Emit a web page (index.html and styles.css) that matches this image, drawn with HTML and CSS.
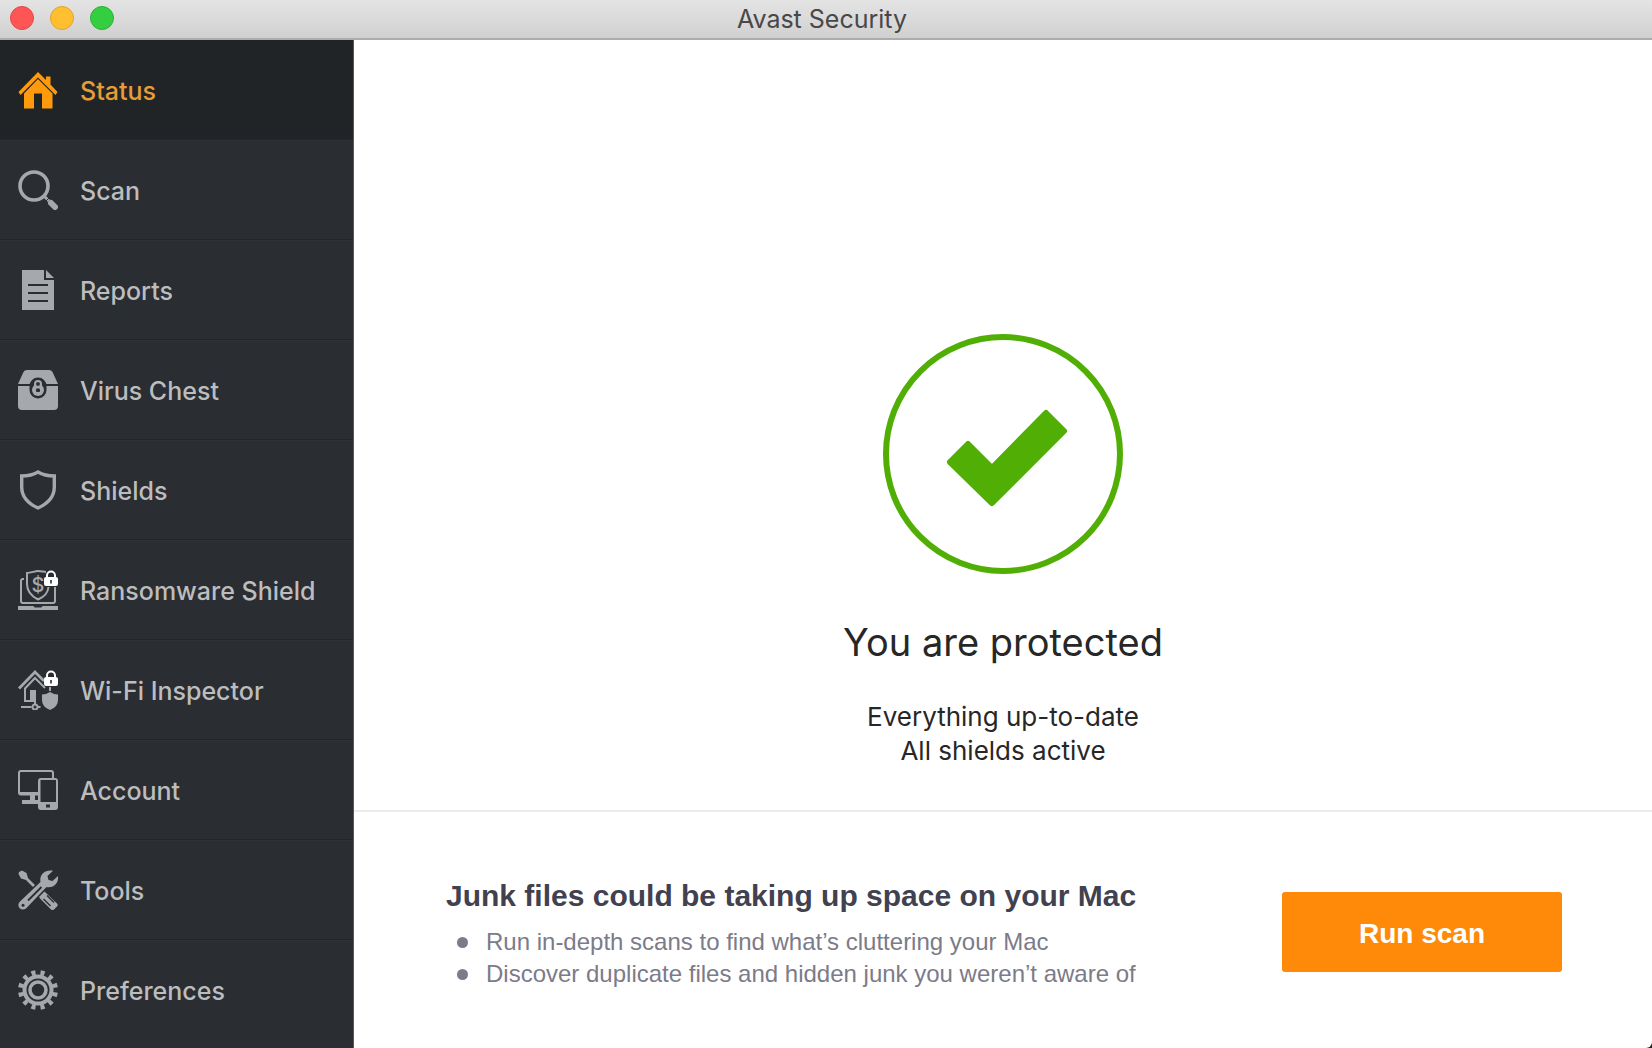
FILE: index.html
```html
<!DOCTYPE html>
<html lang="en">
<head>
    <meta charset="UTF-8">
    <meta name="viewport" content="width=device-width, initial-scale=1.0">
    <title>Avast Security</title>
    <link rel="stylesheet" href="styles.css">
</head>
<body>
    <div class="window">
        <header class="titlebar">
            <div class="window-buttons">
                <button class="dot close" type="button" aria-label="Close"></button>
                <button class="dot minimize" type="button" aria-label="Minimize"></button>
                <button class="dot zoom" type="button" aria-label="Zoom"></button>
            </div>
            <h1 class="title">Avast Security</h1>
        </header>

        <nav class="sidebar">
            <a class="nav-item active" href="#status">
                <svg class="icon" viewBox="0 0 40 40">
                    <path d="M20 2 28 10V6.500h4.500v8L39.500 22 37.500 25 20 7.500 2.500 25 .5 22z"/>
                    <path d="M20 9 34.500 23.500v15H24V23.500h-8v15H6V23.500z"/>
                </svg>
                <span>Status</span>
            </a>
            <a class="nav-item" href="#scan">
                <svg class="icon" viewBox="0 0 40 40">
                    <circle class="line" cx="16" cy="16" r="14" stroke-width="3.600"/>
                    <path class="line" d="M26 26l5 5" stroke-width="3"/>
                    <path class="line" d="M33 33l4 4" stroke-width="6" stroke-linecap="round"/>
                    <path class="cut" d="M27.500 31.500l4-4" stroke-width="1"/>
                </svg>
                <span>Scan</span>
            </a>
            <a class="nav-item" href="#reports">
                <svg class="icon" viewBox="0 0 40 40">
                    <path d="M4 0h22v10h10v30H4z"/>
                    <path d="M28 0l8 8h-8z"/>
                    <path class="cut" d="M10 15h20M10 23h20M10 31h20" stroke-width="2"/>
                </svg>
                <span>Reports</span>
            </a>
            <a class="nav-item" href="#chest">
                <svg class="icon" viewBox="0 0 40 40">
                    <path d="M9 0h22q2.500 0 3.500 2L40 14H0L5.500 2Q6.500 0 9 0z"/>
                    <path d="M0 16h40v20q0 4-4 4H4q-4 0-4-4z"/>
                    <rect class="hole" x="11.500" y="7.500" width="17" height="21" rx="8.500"/>
                    <rect x="16" y="10" width="8" height="10" rx="4"/>
                    <circle cx="20" cy="20" r="6"/>
                    <rect class="hole" x="18.300" y="12.300" width="3.400" height="3.400" rx="1"/>
                    <rect class="hole" x="18" y="18.500" width="4" height="3.500" rx="1"/>
                </svg>
                <span>Virus Chest</span>
            </a>
            <a class="nav-item" href="#shields">
                <svg class="icon" viewBox="0 0 40 40">
                    <path class="line" d="M20 2C15 5 9.500 6 3.700 6V17C3.700 26 10 33.500 20 38 30 33.500 36.300 26 36.300 17V6C30.500 6 25 5 20 2z" stroke-width="3.400"/>
                </svg>
                <span>Shields</span>
            </a>
            <a class="nav-item" href="#ransomware">
                <svg class="icon" viewBox="0 0 40 40">
                    <path class="line" d="M6 9H5Q3 9 3 11V31Q3 33 5 33H35Q37 33 37 31V17" stroke-width="2"/>
                    <path class="line" d="M30.500 17C30 23 26 27 20 29.500 13 26 9 21 9 14V3C13 3 17 1 20 1 23 1 26 2 28 2" stroke-width="2"/>
                    <text class="dollar" x="20" y="22" text-anchor="middle">$</text>
                    <path d="M0 36h15.500q.5 1.500 2 1.500h5q1.500 0 2-1.500H40v4H0z"/>
                    <rect class="lock" x="26" y="7" width="14" height="9" rx="2"/>
                    <path class="shackle" d="M29 8V5.500a4 4 0 0 1 8 0V8"/>
                    <path class="cut" d="M33 10v3.500" stroke-width="1.600"/>
                </svg>
                <span>Ransomware Shield</span>
            </a>
            <a class="nav-item" href="#wifi">
                <svg class="icon" viewBox="0 0 40 40">
                    <path class="line" d="M1 18.500L17 2l9 9" stroke-width="2.800"/>
                    <path class="line" d="M12 31H7V18.500L17 8l10 10M32 17v4" stroke-width="2"/>
                    <path d="M12 20h6v12h-6z"/>
                    <path class="line" d="M17 30v4M3 37h10.500M20 37h2.500" stroke-width="2"/>
                    <circle class="line" cx="17" cy="37" r="2.500" stroke-width="2"/>
                    <path d="M32 22q4 2.500 8 2.500V30q0 7-8 10-8-3-8-10v-5.500q4 0 8-2.500z"/>
                    <rect class="lock" x="26" y="7" width="14" height="9" rx="2"/>
                    <path class="shackle" d="M29 8V5.500a4 4 0 0 1 8 0V8"/>
                    <path class="cut" d="M33 10v3.500" stroke-width="1.600"/>
                </svg>
                <span>Wi-Fi Inspector</span>
            </a>
            <a class="nav-item" href="#account">
                <svg class="icon" viewBox="0 0 40 40">
                    <path d="M3 0h30q3 0 3 3v5h-2V3q0-1-1-1H3Q2 2 2 3v19h18v3.500h-3V30h3v4H4v-4h8v-4.500H3q-3 0-3-3V3q0-3 3-3z"/>
                    <path fill-rule="evenodd" d="M23 8h14q3 0 3 3v26q0 3-3 3H23q-3 0-3-3V11q0-3 3-3zM22.500 10v22h15.500V10zM28 34.500v3h4v-3z"/>
                </svg>
                <span>Account</span>
            </a>
            <a class="nav-item" href="#tools">
                <svg class="icon" viewBox="0 0 40 40">
                    <path d="M1 2L4 .5 8.500 3 10 8 17 15l-2 2-7-7-5-1.500L.5 4z"/>
                    <path d="M26.500 21.500L39 33.500q1.500 1.500 0 3L36 39.500q-1.500 1-3 0L21.500 28V26.500z"/>
                    <path class="cut" d="M25.500 29l7 7M29 25.500l7 7" stroke-width="1.400"/>
                    <path d="M35 .8L29.500 6l1 4 4 1L40 6c1 7-4.500 12.500-11.500 11L8 38.500C3.500 42-2 36.500 1.500 32L22.500 12C21 5 27-1 35 .8z"/>
                    <path class="cut" d="M10 30.500l13.500-13.500" stroke-width="1.800"/>
                    <circle class="hole" cx="5" cy="35.200" r="1.500"/>
                </svg>
                <span>Tools</span>
            </a>
            <a class="nav-item" href="#preferences">
                <svg class="icon" viewBox="0 0 40 40">
                    <circle class="line" cx="20" cy="20" r="13.500" stroke-width="4"/>
                    <circle class="line" cx="20" cy="20" r="8" stroke-width="3.600"/>
                    <circle class="line" cx="20" cy="20" r="17.500" stroke-width="5" pathLength="120" stroke-dasharray="4.400 5.600" stroke-dashoffset="-2.800"/>
                </svg>
                <span>Preferences</span>
            </a>
        </nav>

        <main class="content">
            <section class="status">
                <svg class="check" viewBox="0 0 240 240">
                    <circle cx="120" cy="120" r="117"/>
                    <path d="M67 128L85 110 109 134 163 79 181 97 109 169z"/>
                </svg>
                <h2>You are protected</h2>
                <p>Everything up-to-date<br>All shields active</p>
            </section>
            <section class="promo">
                <div class="promo-text">
                    <h3>Junk files could be taking up space on your Mac</h3>
                    <ul>
                        <li>Run in-depth scans to find what’s cluttering your Mac</li>
                        <li>Discover duplicate files and hidden junk you weren’t aware of</li>
                    </ul>
                </div>
                <button class="run-scan" type="button">Run scan</button>
            </section>
        </main>
    </div>
</body>
</html>
```
FILE: styles.css
```css
* {
    box-sizing: border-box;
}
body {
    margin: 0;
    font-family: Inter, "Liberation Sans", sans-serif;
    background-color: #222;
}
.window {
    display: grid;
    grid-template-columns: 354px 1fr;
    grid-template-rows: 40px 1fr;
    min-height: 100vh;
    background-color: #fff;
    border-bottom-right-radius: 6px;
}

/* title bar */
.titlebar {
    grid-column: 1 / -1;
    display: grid;
    grid-template-columns: 1fr auto 1fr;
    align-items: center;
    padding: 0 18px 0 10px;
    background: linear-gradient(#e4e4e4, #d0d0d0);
    border-bottom: 2px solid #acacac;
}
.window-buttons {
    display: flex;
    gap: 16px;
    padding-bottom: 2px;
}
.dot {
    width: 24px;
    height: 24px;
    padding: 0;
    border: 1px solid;
    border-radius: 50%;
}
.close {
    background-color: #ff5555;
    border-color: #e2474a;
}
.minimize {
    background-color: #ffbf30;
    border-color: #e2a32c;
}
.zoom {
    background-color: #34ce41;
    border-color: #2bb236;
}
.title {
    margin: 0;
    font-size: 25px;
    font-weight: 400;
    line-height: 32px;
    color: #484848;
}

/* sidebar */
.sidebar {
    display: flex;
    flex-direction: column;
    background-color: #2a2d32;
    border-right: 1px solid #56585c;
}
.nav-item {
    --row: #2a2d32;
    display: flex;
    align-items: center;
    gap: 22px;
    height: 100px;
    padding-left: 18px;
    border-bottom: 1px solid #222529;
    box-shadow: inset 0 1px #2e3136;
    background-color: var(--row);
    color: #bcbdbe;
    font-size: 25px;
    font-weight: 500;
    line-height: 32px;
    text-decoration: none;
}
.nav-item span {
    padding-top: 2px;
}
.nav-item.active {
    --row: #212427;
    box-shadow: none;
    color: #e59d37;
}
.nav-item:last-child {
    border-bottom: none;
}
.icon {
    width: 40px;
    height: 40px;
    fill: #a5a9ac;
}
.active .icon {
    fill: #ff9a0c;
}
.icon .line {
    fill: none;
    stroke: #a5a9ac;
}
.icon .cut {
    fill: none;
    stroke: var(--row);
}
.icon .hole {
    fill: var(--row);
}
.icon .lock {
    fill: #fff;
}
.icon .shackle {
    fill: none;
    stroke: #fff;
    stroke-width: 2;
}
.icon .dollar {
    font-size: 20px;
}

/* main area */
.content {
    display: grid;
    grid-template-rows: 1fr 238px;
}
.status {
    display: flex;
    flex-direction: column;
    align-items: center;
    justify-content: flex-end;
    padding-bottom: 42px;
    color: #272727;
    text-align: center;
}
.check {
    width: 240px;
    height: 240px;
}
.check circle {
    fill: none;
    stroke: #50ae05;
    stroke-width: 6;
}
.check path {
    fill: #50ae05;
    stroke: #50ae05;
    stroke-width: 6;
    stroke-linejoin: round;
}
.status h2 {
    margin: 44px 0 34px;
    font-size: 38px;
    font-weight: 400;
    line-height: 48px;
}
.status p {
    margin: 0;
    font-size: 26px;
    line-height: 34px;
}
.promo {
    display: flex;
    align-items: center;
    justify-content: space-between;
    padding: 4px 90px 0 92px;
    border-top: 2px solid #ebebeb;
    font-family: "Liberation Sans", Arial, sans-serif;
}
.promo-text {
    padding-top: 4px;
}
.promo h3 {
    margin: 0 0 12px;
    font-size: 30px;
    line-height: 36px;
    color: #41414f;
}
.promo ul {
    margin: 0;
    padding-left: 11px;
    list-style: none;
    font-size: 24px;
    line-height: 32px;
    color: #7b7b89;
}
.promo li {
    display: flex;
    align-items: center;
    gap: 18px;
}
.promo li::before {
    content: "";
    width: 11px;
    height: 11px;
    border-radius: 50%;
    background-color: #7b7b89;
}
.run-scan {
    width: 280px;
    height: 80px;
    padding: 4px 0 0;
    border: none;
    border-radius: 3px;
    background-color: #ff8a0a;
    color: #fff;
    font-family: inherit;
    font-size: 28px;
    font-weight: 700;
    cursor: pointer;
}
```
